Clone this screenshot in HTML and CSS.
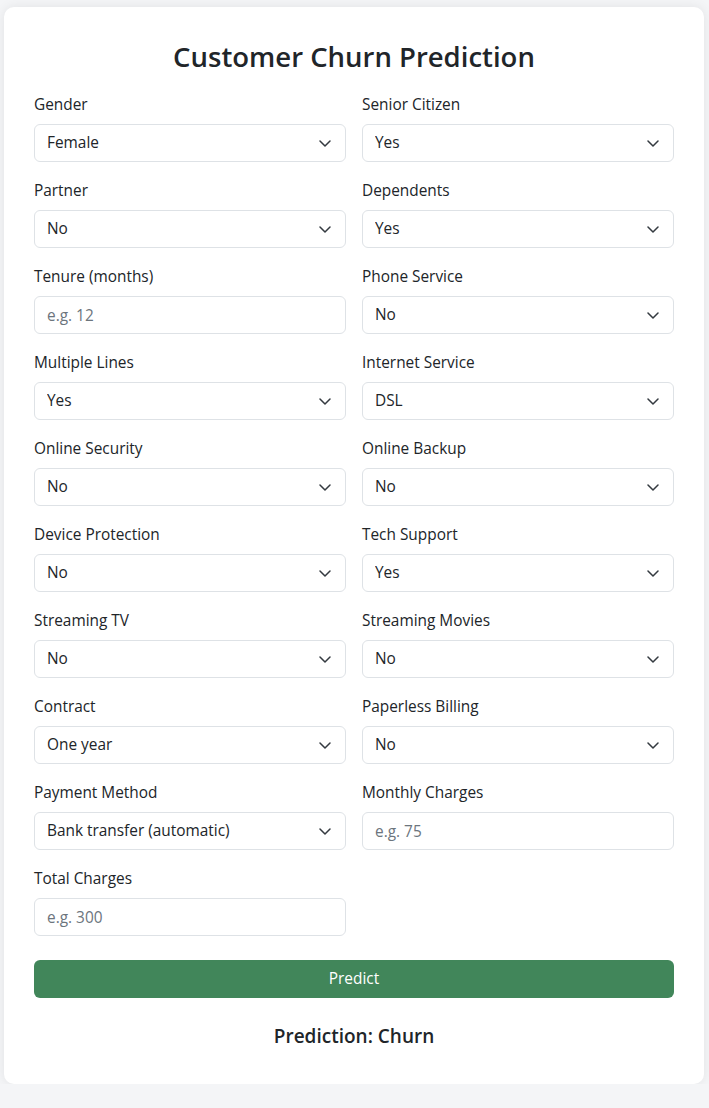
FILE: index.html
```html
<!DOCTYPE html>
<html lang="en">
<head>
<meta charset="utf-8">
<title>Customer Churn Prediction</title>
<link rel="stylesheet" href="styles.css">
</head>
<body>
<div class="wrap">
  <div class="card">
    <h2 class="title">Customer Churn Prediction</h2>
    <form class="form">
      <div class="grid">
        <div class="group"><label>Gender</label><div class="sel"><select><option>Female</option><option>Male</option></select><svg viewBox="0 0 12 7"><path d="M1 1l5 5 5-5"/></svg></div></div>
        <div class="group"><label>Senior Citizen</label><div class="sel"><select><option>Yes</option><option>No</option></select><svg viewBox="0 0 12 7"><path d="M1 1l5 5 5-5"/></svg></div></div>
        <div class="group"><label>Partner</label><div class="sel"><select><option>No</option><option>Yes</option></select><svg viewBox="0 0 12 7"><path d="M1 1l5 5 5-5"/></svg></div></div>
        <div class="group"><label>Dependents</label><div class="sel"><select><option>Yes</option><option>No</option></select><svg viewBox="0 0 12 7"><path d="M1 1l5 5 5-5"/></svg></div></div>
        <div class="group"><label>Tenure (months)</label><input type="text" placeholder="e.g. 12"></div>
        <div class="group"><label>Phone Service</label><div class="sel"><select><option>No</option><option>Yes</option></select><svg viewBox="0 0 12 7"><path d="M1 1l5 5 5-5"/></svg></div></div>
        <div class="group"><label>Multiple Lines</label><div class="sel"><select><option>Yes</option><option>No</option></select><svg viewBox="0 0 12 7"><path d="M1 1l5 5 5-5"/></svg></div></div>
        <div class="group"><label>Internet Service</label><div class="sel"><select><option>DSL</option><option>Fiber optic</option><option>No</option></select><svg viewBox="0 0 12 7"><path d="M1 1l5 5 5-5"/></svg></div></div>
        <div class="group"><label>Online Security</label><div class="sel"><select><option>No</option><option>Yes</option></select><svg viewBox="0 0 12 7"><path d="M1 1l5 5 5-5"/></svg></div></div>
        <div class="group"><label>Online Backup</label><div class="sel"><select><option>No</option><option>Yes</option></select><svg viewBox="0 0 12 7"><path d="M1 1l5 5 5-5"/></svg></div></div>
        <div class="group"><label>Device Protection</label><div class="sel"><select><option>No</option><option>Yes</option></select><svg viewBox="0 0 12 7"><path d="M1 1l5 5 5-5"/></svg></div></div>
        <div class="group"><label>Tech Support</label><div class="sel"><select><option>Yes</option><option>No</option></select><svg viewBox="0 0 12 7"><path d="M1 1l5 5 5-5"/></svg></div></div>
        <div class="group"><label>Streaming TV</label><div class="sel"><select><option>No</option><option>Yes</option></select><svg viewBox="0 0 12 7"><path d="M1 1l5 5 5-5"/></svg></div></div>
        <div class="group"><label>Streaming Movies</label><div class="sel"><select><option>No</option><option>Yes</option></select><svg viewBox="0 0 12 7"><path d="M1 1l5 5 5-5"/></svg></div></div>
        <div class="group"><label>Contract</label><div class="sel"><select><option>One year</option><option>Month-to-month</option><option>Two year</option></select><svg viewBox="0 0 12 7"><path d="M1 1l5 5 5-5"/></svg></div></div>
        <div class="group"><label>Paperless Billing</label><div class="sel"><select><option>No</option><option>Yes</option></select><svg viewBox="0 0 12 7"><path d="M1 1l5 5 5-5"/></svg></div></div>
        <div class="group"><label>Payment Method</label><div class="sel"><select><option>Bank transfer (automatic)</option><option>Credit card (automatic)</option><option>Electronic check</option><option>Mailed check</option></select><svg viewBox="0 0 12 7"><path d="M1 1l5 5 5-5"/></svg></div></div>
        <div class="group"><label>Monthly Charges</label><input type="text" placeholder="e.g. 75"></div>
        <div class="group"><label>Total Charges</label><input type="text" placeholder="e.g. 300"></div>
      </div>
      <button type="button" class="btn">Predict</button>
    </form>
    <h4 class="result">Prediction: Churn</h4>
  </div>
</div>
</body>
</html>
```

FILE: styles.css
```css
* { box-sizing: border-box; }
html, body { margin: 0; padding: 0; }
body {
  background: #f4f5f7;
  font-family: "Segoe UI", "Open Sans", "Noto Sans", sans-serif;
  color: #212529;
  font-size: 15.4px;
  line-height: 1.5;
}
.wrap {
  width: 700px;
  margin: 0 0 0 4px;
  padding-top: 7px;
}
.card {
  background: #fff;
  border-radius: 10px;
  box-shadow: 0 0 12px rgba(0, 0, 0, 0.08);
  padding: 30px 30px 36px;
}
.title {
  margin: 3px 0 20px;
  text-align: center;
  font-size: 27.5px;
  font-weight: 600;
  line-height: 1.2;
  color: #212529;
}
.grid {
  display: grid;
  grid-template-columns: 1fr 1fr;
  column-gap: 16px;
}
.group {
  display: flex;
  flex-direction: column;
  margin-bottom: 17px;
}
.group label {
  display: block;
  line-height: 24px;
  margin-bottom: 7px;
}
.sel { position: relative; }
select, input {
  display: block;
  width: 100%;
  height: 38px;
  padding: 0 36px 0 12px;
  font: inherit;
  color: #212529;
  background: #fff;
  border: 1px solid #dee2e6;
  border-radius: 6px;
  appearance: none;
  -webkit-appearance: none;
  outline: none;
}
input::placeholder { color: #6c757d; opacity: 1; }
.sel svg {
  position: absolute;
  right: 15px;
  top: 16px;
  width: 12px;
  height: 7px;
  fill: none;
  stroke: #343a40;
  stroke-width: 1.5;
  stroke-linecap: round;
  stroke-linejoin: round;
  pointer-events: none;
}
.btn {
  display: block;
  width: 100%;
  height: 38px;
  margin-top: 7px;
  border: none;
  border-radius: 6px;
  background: #41865a;
  color: #fff;
  font: inherit;
}
.result {
  margin: 27px 0 0;
  text-align: center;
  font-size: 19px;
  font-weight: 600;
  line-height: 1.2;
}
```
